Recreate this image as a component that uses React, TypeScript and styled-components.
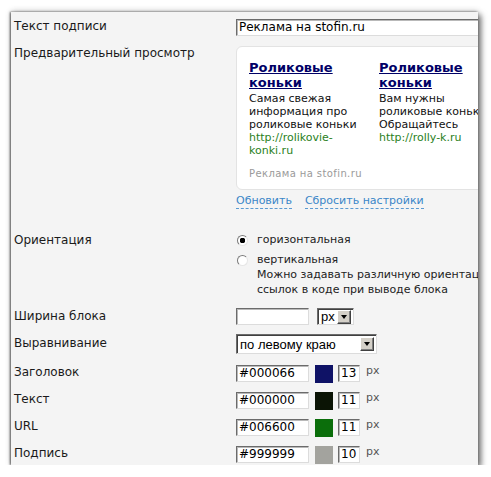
import React from "react";
import styled, { createGlobalStyle } from "styled-components";

const Global = createGlobalStyle`
  html, body { margin: 0; padding: 0; background: #fff; }
  body { font-family: "DejaVu Sans", Verdana, sans-serif; color: #1a1a1a; }
`;

const Panel = styled.div`
  margin: 12px 0 0 11px;
  width: 467px;
  height: 453px;
  box-sizing: border-box;
  background: #f4f4f4;
  overflow: hidden;
  padding: 6px 0 0 3px;
  box-shadow: 3px 3px 6px rgba(0, 0, 0, 0.55), -1px 0 2px rgba(0, 0, 0, 0.6),
    0 -1px 6px rgba(0, 0, 0, 0.18);
  display: flex;
  flex-direction: column;
`;

const Row = styled.div<{ $mt: number; $h?: number }>`
  flex: none;
  display: grid;
  grid-template-columns: 222px 400px;
  align-items: start;
  margin-top: ${(p) => p.$mt}px;
  ${(p) => (p.$h ? `height: ${p.$h}px;` : "")}
`;

const Label = styled.div<{ $mt?: number }>`
  font-size: 12px;
  line-height: 16px;
  white-space: nowrap;
  margin-top: ${(p) => p.$mt ?? 0}px;
`;

const Field = styled.div`
  display: flex;
  flex-direction: column;
  align-items: flex-start;
`;

const Inline = styled.div`
  display: flex;
  align-items: flex-start;
`;

const TextInput = styled.div<{ $w: number; $mt?: number }>`
  width: ${(p) => p.$w}px;
  height: 17px;
  box-sizing: border-box;
  margin-top: ${(p) => p.$mt ?? 0}px;
  background: #fff;
  border-style: solid;
  border-width: 1px;
  border-color: #6b6b6b #dcdcdc #dcdcdc #6b6b6b;
  box-shadow: inset 1px 1px 0 #b9b9b9;
  font-size: 12px;
  line-height: 15px;
  padding: 0 2px;
  white-space: nowrap;
  overflow: hidden;
  color: #000;
`;

const Swatch = styled.div<{ $c: string }>`
  width: 18px;
  height: 18px;
  margin: 1px 5px 0 6px;
  background: ${(p) => p.$c};
`;

const Unit = styled.span`
  font-size: 11px;
  line-height: 14px;
  margin-left: 6px;
  color: #555;
`;

const Preview = styled.div`
  margin-top: 1px;
  width: 320px;
  height: 144px;
  box-sizing: border-box;
  background: #fff;
  border: 1px solid #e3e3e3;
  border-radius: 6px;
  padding: 13px 0 0 12px;
`;

const Ads = styled.div`
  display: flex;
  gap: 10px;
`;

const Ad = styled.div`
  width: 120px;
  flex: none;
  font-size: 11px;
  line-height: 13px;
  color: #111;
`;

const AdTitle = styled.a`
  display: block;
  font-weight: bold;
  font-size: 13px;
  line-height: 15px;
  color: #000066;
  text-decoration: underline;
  margin-bottom: 2px;
`;

const AdUrl = styled.div`
  color: #2a7f22;
`;

const AdFooter = styled.div`
  margin-top: 10px;
  font-size: 10px;
  line-height: 13px;
  color: #9a9a9a;
  letter-spacing: 0.4px;
`;

const Links = styled.div`
  display: flex;
  gap: 13px;
  margin-top: 4px;
`;

const DashLink = styled.a`
  font-size: 11px;
  line-height: 14px;
  color: #3a86c8;
  text-decoration: none;
  border-bottom: 1px dashed #5a9ad2;
`;

const RadioLine = styled.div<{ $mt?: number }>`
  display: flex;
  align-items: center;
  gap: 9px;
  margin-top: ${(p) => p.$mt ?? 0}px;
  margin-left: 1px;
  font-size: 11px;
  line-height: 14px;
  color: #222;
`;

const Radio = styled.span<{ $on?: boolean }>`
  width: 11px;
  height: 11px;
  box-sizing: border-box;
  border-radius: 50%;
  border: 1px solid;
  border-color: #7a7a7a #e6e6e6 #e6e6e6 #7a7a7a;
  background: ${(p) =>
    p.$on ? "radial-gradient(circle, #000 0 2.6px, #fff 3px)" : "#fff"};
  flex: none;
`;

const Note = styled.div`
  margin-left: 21px;
  font-size: 11px;
  line-height: 15px;
  color: #222;
  white-space: nowrap;
`;

const Select = styled.div<{ $w: number; $h: number }>`
  width: ${(p) => p.$w}px;
  height: ${(p) => p.$h}px;
  box-sizing: border-box;
  background: #fff;
  border-style: solid;
  border-width: 1px;
  border-color: #6b6b6b #dcdcdc #dcdcdc #6b6b6b;
  box-shadow: inset 1px 1px 0 #404040;
  display: flex;
  align-items: center;
  justify-content: space-between;
  padding: 0 2px 0 3px;
  font-family: "Liberation Sans", Arial, sans-serif;
  font-size: 13px;
  color: #000;
`;

const ArrowBtn = styled.span`
  width: 14px;
  height: 14px;
  box-sizing: border-box;
  background: #d4d0c8;
  border: 1px solid;
  border-color: #fff #404040 #404040 #fff;
  box-shadow: inset -1px -1px 0 #808080;
  display: flex;
  align-items: center;
  justify-content: center;
  &::after {
    content: "";
    border-left: 3.5px solid transparent;
    border-right: 3.5px solid transparent;
    border-top: 4px solid #000;
  }
`;

const colors = [
  { label: "Заголовок", hex: "#000066", sw: "#0f1266", size: "13" },
  { label: "Текст", hex: "#000000", sw: "#0b1405", size: "11" },
  { label: "URL", hex: "#006600", sw: "#0b6e0b", size: "11" },
  { label: "Подпись", hex: "#999999", sw: "#a3a39e", size: "10" },
];

export default function App() {
  return (
    <>
      <Global />
      <Panel>
        <Row $mt={0}>
          <Label>Текст подписи</Label>
          <TextInput $w={320} $mt={1}>
            Реклама на stofin.ru
          </TextInput>
        </Row>

        <Row $mt={9}>
          <Label>Предварительный просмотр</Label>
          <Field>
            <Preview>
              <Ads>
                <Ad>
                  <AdTitle>
                    Роликовые
                    <br />
                    коньки
                  </AdTitle>
                  Самая свежая
                  <br />
                  информация про
                  <br />
                  роликовые коньки
                  <AdUrl>
                    http://rolikovie-
                    <br />
                    konki.ru
                  </AdUrl>
                </Ad>
                <Ad>
                  <AdTitle>
                    Роликовые
                    <br />
                    коньки
                  </AdTitle>
                  Вам нужны
                  <br />
                  роликовые коньки?
                  <br />
                  Обращайтесь
                  <AdUrl>http://rolly-k.ru</AdUrl>
                </Ad>
              </Ads>
              <AdFooter>Реклама на stofin.ru</AdFooter>
            </Preview>
            <Links>
              <DashLink>Обновить</DashLink>
              <DashLink>Сбросить настройки</DashLink>
            </Links>
          </Field>
        </Row>

        <Row $mt={23}>
          <Label>Ориентация</Label>
          <Field>
            <RadioLine $mt={1}>
              <Radio $on />
              горизонтальная
            </RadioLine>
            <RadioLine $mt={6}>
              <Radio />
              вертикальная
            </RadioLine>
            <Note>
              Можно задавать различную ориентацию
              <br />
              ссылок в коде при выводе блока
            </Note>
          </Field>
        </Row>

        <Row $mt={11}>
          <Label>Ширина блока</Label>
          <Inline>
            <TextInput $w={73} />
            <Select $w={37} $h={17} style={{ marginLeft: 8 }}>
              px
              <ArrowBtn />
            </Select>
          </Inline>
        </Row>

        <Row $mt={9}>
          <Label $mt={1}>Выравнивание</Label>
          <Select $w={141} $h={20}>
            по левому краю
            <ArrowBtn />
          </Select>
        </Row>

        {colors.map((c, i) => (
          <Row key={c.label} $mt={i === 0 ? 10 : 0} $h={27}>
            <Label>{c.label}</Label>
            <Inline>
              <TextInput $w={73} $mt={1}>
                {c.hex}
              </TextInput>
              <Swatch $c={c.sw} />
              <TextInput $w={22} $mt={1}>
                {c.size}
              </TextInput>
              <Unit>px</Unit>
            </Inline>
          </Row>
        ))}
      </Panel>
    </>
  );
}
